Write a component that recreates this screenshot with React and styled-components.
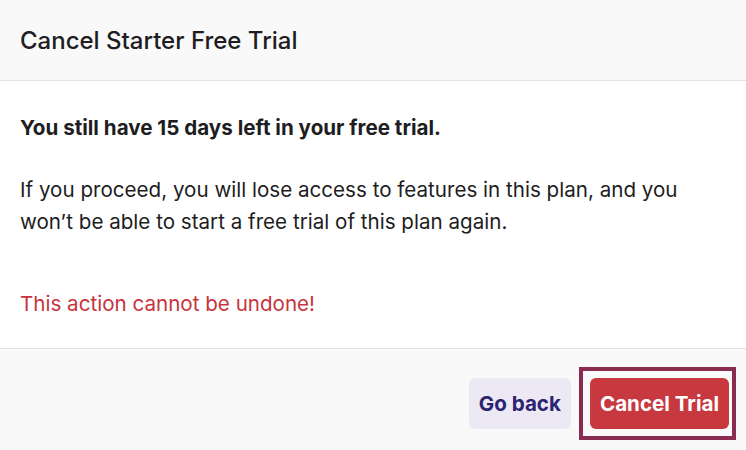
import React from "react";
import styled, { createGlobalStyle } from "styled-components";

const GlobalStyle = createGlobalStyle`
  html, body {
    margin: 0;
    padding: 0;
    background: #ffffff;
  }
  body {
    font-family: Inter, "Noto Sans", "Liberation Sans", sans-serif;
    color: #1d1d22;
    -webkit-font-smoothing: antialiased;
  }
`;

const Modal = styled.div`
  width: 746px;
  height: 450px;
  display: flex;
  flex-direction: column;
  background: #ffffff;
`;

const Header = styled.header`
  height: 81px;
  display: flex;
  align-items: center;
  padding: 0 20px;
  background: #f9f9f9;
  border-bottom: 1px solid #e2e2e5;
`;

const Title = styled.h2`
  margin: 0;
  font-size: 24px;
  font-weight: 500;
  color: #1d1d22;
`;

const Body = styled.div`
  padding: 31px 20px 28px;
  display: flex;
  flex-direction: column;
`;

const Text = styled.p`
  margin: 0;
  font-size: 20.6px;
  line-height: 32px;
  font-weight: ${(p) => (p.$strong ? 700 : 400)};
  color: ${(p) => (p.$danger ? "#c7343c" : "#1d1d22")};
  margin-top: ${(p) => p.$gap || 0}px;
`;

const Footer = styled.footer`
  flex: 1;
  display: flex;
  justify-content: flex-end;
  align-items: flex-start;
  gap: 8px;
  padding: 18px 10px 10px;
  background: #f9f9f9;
  border-top: 1px solid #e2e2e5;
`;

const Button = styled.button`
  height: 51px;
  padding: 0 10px;
  border: none;
  border-radius: 6px;
  font-family: inherit;
  font-size: 20.6px;
  font-weight: 700;
  cursor: pointer;
  background: ${(p) => (p.$danger ? "#c8393f" : "#ece9f5")};
  color: ${(p) => (p.$danger ? "#ffffff" : "#2c2470")};
`;

const GoBack = styled(Button)`
  margin-top: 11px;
`;

const FocusRing = styled.span`
  display: inline-flex;
  padding: 7px 3px 7px 7px;
  border: 4px solid #8a2c50;
`;

export default function App() {
  return (
    <Modal>
      <GlobalStyle />
      <Header>
        <Title>Cancel Starter Free Trial</Title>
      </Header>
      <Body>
        <Text $strong>You still have 15 days left in your free trial.</Text>
        <Text $gap={30}>
          If you proceed, you will lose access to features in this plan, and you
          won’t be able to start a free trial of this plan again.
        </Text>
        <Text $danger $gap={50}>
          This action cannot be undone!
        </Text>
      </Body>
      <Footer>
        <GoBack>Go back</GoBack>
        <FocusRing>
          <Button $danger>Cancel Trial</Button>
        </FocusRing>
      </Footer>
    </Modal>
  );
}
